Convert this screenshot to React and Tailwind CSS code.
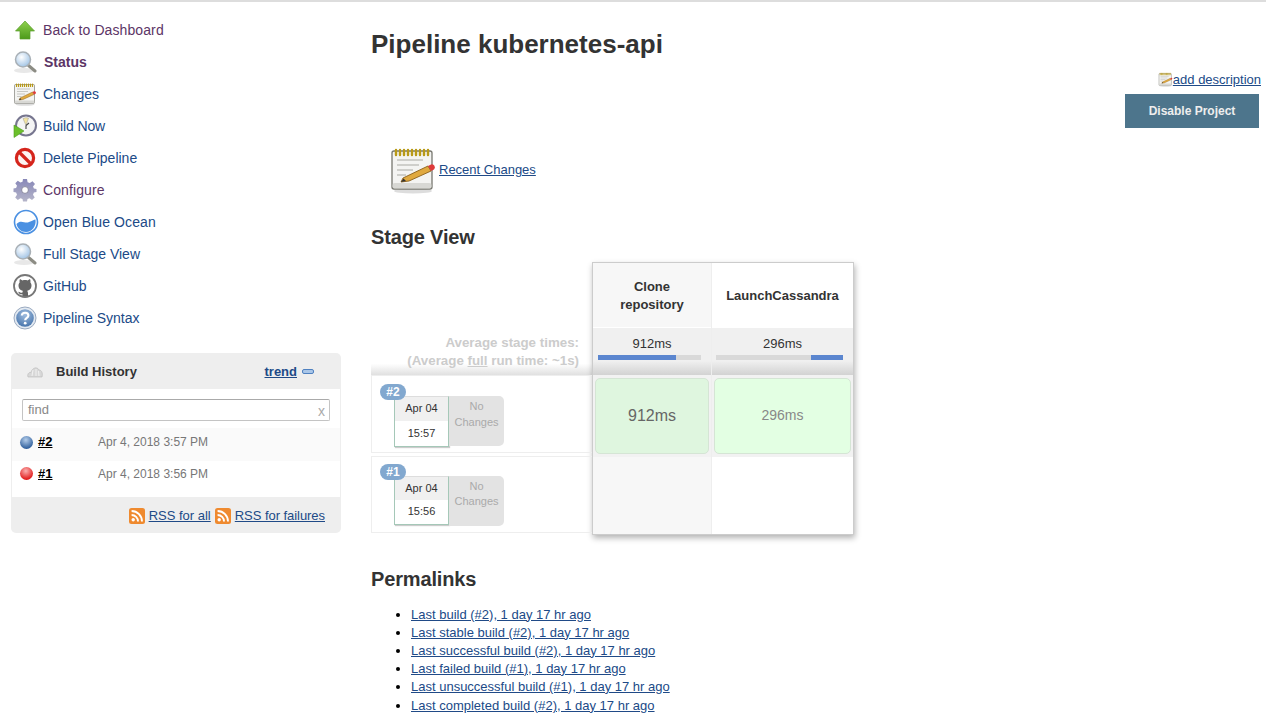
const ArrowIcon = () => (
  <svg width="24" height="24" viewBox="0 0 24 24">
    <defs>
      <linearGradient id="arrowG" x1="0" y1="0" x2="0" y2="1">
        <stop offset="0" stopColor="#8fd14f" />
        <stop offset="1" stopColor="#4c9a1a" />
      </linearGradient>
    </defs>
    <path d="M12 3 L21.5 13 L17 13 L17 21 L7 21 L7 13 L2.5 13 Z" fill="url(#arrowG)" stroke="#5a9e2a" strokeWidth="0.7" />
  </svg>
);

const SearchIcon = () => (
  <svg width="24" height="24" viewBox="0 0 24 24">
    <defs>
      <radialGradient id="lensG" cx="0.4" cy="0.35" r="0.8">
        <stop offset="0" stopColor="#ffffff" />
        <stop offset="1" stopColor="#8fb8e0" />
      </radialGradient>
    </defs>
    <ellipse cx="11" cy="20.5" rx="10" ry="2.5" fill="#e8e8e8" />
    <path d="M15.5 15.5 L22 21" stroke="#8c8c84" strokeWidth="3" strokeLinecap="round" />
    <circle cx="10" cy="9.5" r="7.5" fill="url(#lensG)" stroke="#a9b0b6" strokeWidth="1.5" />
  </svg>
);

const NotepadIcon = ({ size = 24 }) => (
  <svg width={size} height={size} viewBox="0 0 48 48">
    <ellipse cx="24" cy="45" rx="19" ry="2.5" fill="#ddd" />
    <rect x="3" y="5" width="40" height="38" rx="2" fill="#f4f4f2" stroke="#77776f" strokeWidth="1.3" />
    <rect x="3.6" y="37" width="38.8" height="5.4" rx="2" fill="#d8d8d4" />
    <path d="M8 14 H34 M8 19 H30 M8 24 H24 M8 29 H17" stroke="#a9a9a3" strokeWidth="1.2" />
    <path d="M7 4 V9 M11 4 V9 M15 4 V9 M19 4 V9 M23 4 V9 M27 4 V9 M31 4 V9 M35 4 V9 M39 4 V9" stroke="#b99a17" strokeWidth="2.4" strokeLinecap="round" />
    <path d="M14 32 L39 20 L42 25 L20 35 L12 36 Z" fill="#e0a93f" stroke="#8a5f1a" strokeWidth="0.9" />
    <path d="M39 20 L42 18.5 A3 3 0 0 1 45 23.5 L42 25 Z" fill="#de3b3b" />
    <path d="M12 36 L14.5 32.5 L17 35 Z" fill="#333" />
  </svg>
);

const BuildIcon = () => (
  <svg width="24" height="24" viewBox="0 0 24 24">
    <circle cx="13" cy="11.5" r="10" fill="#f4f4f4" stroke="#77768f" strokeWidth="2" />
    <path d="M13 11.5 L10 4.5 A8 8 0 0 1 15.5 4 Z" fill="#f2e3a0" stroke="#999" strokeWidth="0.5" />
    <path d="M13 11.5 L16 9 M13 11.5 L13 15" stroke="#444" strokeWidth="1.1" />
    <path d="M1 11 L11 17 L1 23.5 Z" fill="#6cc02b" stroke="#4e9a1c" strokeWidth="0.6" />
  </svg>
);

const DeleteIcon = () => (
  <svg width="24" height="24" viewBox="0 0 24 24">
    <circle cx="12" cy="12" r="8.6" fill="#fdf4f2" stroke="#d5251c" strokeWidth="3.2" />
    <path d="M6 6 L18 18" stroke="#d5251c" strokeWidth="3.2" />
  </svg>
);

const GearIcon = () => (
  <svg width="24" height="24" viewBox="0 0 24 24">
    <defs>
      <linearGradient id="gearG" x1="0" y1="0" x2="0" y2="1">
        <stop offset="0" stopColor="#8787b8" />
        <stop offset="1" stopColor="#b5b5c9" />
      </linearGradient>
    </defs>
    <path
      d="M10 1 H14 L14.6 4.2 L16.8 5.1 L19.5 3.3 L22 6 L20 8.6 L20.9 10.6 L23.5 11 V14 L20.9 14.6 L20 16.8 L21.7 19.5 L19 22 L16.5 20.3 L14.5 21 L14 23.5 H10 L9.5 21 L7.4 20.2 L4.8 22 L2.2 19.4 L4 16.8 L3.1 14.6 L0.5 14 V10.5 L3.1 10 L4 7.8 L2.3 5.2 L4.8 2.8 L7.4 4.6 L9.5 3.8 Z"
      fill="url(#gearG)"
    />
    <circle cx="12" cy="12" r="3.4" fill="#fff" stroke="#77778f" strokeWidth="0.8" />
  </svg>
);

const OceanIcon = () => (
  <svg width="26" height="26" viewBox="0 0 26 26">
    <circle cx="13" cy="13" r="11.5" fill="#fff" stroke="#4a90e2" strokeWidth="1.6" />
    <path d="M3.5 15 C8 10 12 15 16 13 C19 12 21 10.5 22.5 10.5 C23.5 17 19 23 13 23 C8 23 4.5 19.5 3.5 15 Z" fill="#4a90e2" />
  </svg>
);

const GithubIcon = () => (
  <svg width="24" height="24" viewBox="0 0 24 24">
    <circle cx="12" cy="12" r="11" fill="#fff" stroke="#777" strokeWidth="1.8" />
    <path
      d="M7 5 L9.5 6.4 C11 6 13 6 14.5 6.4 L17 5 C17.6 6.3 17.6 7.5 17.3 8.3 C18 9.2 18.5 10.2 18.5 11.5 C18.5 15 16 16.5 14 16.8 C14.6 17.3 15 18 15 19 V22 H9.5 V20.2 C7.5 20.7 6 20 5.2 17.8 L7 18.3 C7.6 19 8.5 19 9.5 18.6 C9.5 17.8 9.7 17.2 10 16.8 C8 16.5 5.5 15 5.5 11.5 C5.5 10.2 6 9.2 6.7 8.3 C6.4 7.5 6.4 6.3 7 5 Z"
      fill="#666"
    />
  </svg>
);

const HelpIcon = () => (
  <svg width="24" height="24" viewBox="0 0 24 24">
    <defs>
      <radialGradient id="helpG" cx="0.5" cy="0.3" r="0.8">
        <stop offset="0" stopColor="#a3bfe0" />
        <stop offset="1" stopColor="#3b6ba5" />
      </radialGradient>
    </defs>
    <circle cx="12" cy="12" r="11" fill="#e3eaf2" stroke="#9aaac0" strokeWidth="1" />
    <circle cx="12" cy="12" r="8.8" fill="url(#helpG)" />
    <path d="M8.8 9.5 C9 5.8 15.4 5.8 15.4 9.5 C15.4 12 12.2 11.8 12.2 14.2" fill="none" stroke="#fff" strokeWidth="2.2" />
    <circle cx="12.2" cy="17.2" r="1.4" fill="#fff" />
  </svg>
);

const CloudIcon = () => (
  <svg width="16" height="12" viewBox="0 0 16 12">
    <path d="M1 11 C0 8 2 6 4 6.5 C5 2 10 0 12 4 C15 4 16 8 15 11 Z" fill="#d8d8d8" stroke="#bbb" strokeWidth="0.6" />
    <path d="M5 10 L6 4 M9 10 V3 M12 10 L11.5 5" stroke="#f4f4f4" strokeWidth="0.9" />
  </svg>
);

const RssIcon = () => (
  <svg width="16" height="16" viewBox="0 0 16 16" className="shrink-0">
    <rect x="0" y="0" width="16" height="16" rx="2.5" fill="#ef8a2f" />
    <circle cx="4.2" cy="11.8" r="1.7" fill="#fff" />
    <path d="M2.6 7 A6.4 6.4 0 0 1 9 13.5" fill="none" stroke="#fff" strokeWidth="1.9" />
    <path d="M2.6 3 A10.4 10.4 0 0 1 13 13.5" fill="none" stroke="#fff" strokeWidth="1.9" />
  </svg>
);

const tasks = [
  { label: 'Back to Dashboard', icon: <ArrowIcon />, color: 'text-[#5c3566] tracking-[0.1px]' },
  { label: 'Status', icon: <SearchIcon />, color: 'text-[#5c3566] font-bold pl-[1px]' },
  { label: 'Changes', icon: <NotepadIcon />, color: 'text-[#204a87]' },
  { label: 'Build Now', icon: <BuildIcon />, color: 'text-[#204a87] tracking-[-0.1px]' },
  { label: 'Delete Pipeline', icon: <DeleteIcon />, color: 'text-[#204a87]' },
  { label: 'Configure', icon: <GearIcon />, color: 'text-[#5c3566] tracking-[0.1px]' },
  { label: 'Open Blue Ocean', icon: <OceanIcon />, color: 'text-[#204a87] tracking-[0.1px]' },
  { label: 'Full Stage View', icon: <SearchIcon />, color: 'text-[#204a87]' },
  { label: 'GitHub', icon: <GithubIcon />, color: 'text-[#204a87]' },
  { label: 'Pipeline Syntax', icon: <HelpIcon />, color: 'text-[#204a87]' },
];

const builds = [
  { id: '#2', date: 'Apr 4, 2018 3:57 PM', ball: 'bg-[radial-gradient(circle_at_45%_30%,#b4cdea,#2f5f9c_75%)]', row: 'bg-[#fafafa] h-[33px] pb-[5px]' },
  { id: '#1', date: 'Apr 4, 2018 3:56 PM', ball: 'bg-[radial-gradient(circle_at_45%_30%,#fbb0b0,#e01818_75%)]', row: 'bg-white h-[29px] pb-[4px]' },
];

const runs = [
  { id: '#2', time: '15:57', box: 'h-[78px] pt-[20px]', badge: 'top-[8px]', top: 'h-[24px]', bottom: 'h-[25px]', changes: 'pt-[2px] leading-[16px]' },
  { id: '#1', time: '15:56', box: 'mt-[3px] h-[77px] pt-[19px]', badge: 'top-[7px]', top: 'h-[23px]', bottom: 'h-[24px]', changes: 'pt-[3px] leading-[15px]' },
];

const permalinks = [
  'Last build (#2), 1 day 17 hr ago',
  'Last stable build (#2), 1 day 17 hr ago',
  'Last successful build (#2), 1 day 17 hr ago',
  'Last failed build (#1), 1 day 17 hr ago',
  'Last unsuccessful build (#1), 1 day 17 hr ago',
  'Last completed build (#2), 1 day 17 hr ago',
];

function Sidebar() {
  return (
    <aside className="w-[341px] shrink-0 pl-[11px] pt-[12px]">
      <ul>
        {tasks.map((task) => (
          <li key={task.label} className="flex h-8 items-center">
            <span className="flex w-[32px] shrink-0 pl-[2px]">{task.icon}</span>
            <a className={`text-[14px] ${task.color}`}>{task.label}</a>
          </li>
        ))}
      </ul>

      <div className="mt-[19px] overflow-hidden rounded-[5px] bg-[#eeeeee] text-[#333]">
        <div className="flex h-[36px] items-center pl-[16px] pt-[1px]">
          <CloudIcon />
          <b className="ml-[13px] text-[13px] text-[#333]">Build History</b>
          <a className="ml-auto text-[13px] font-bold text-[#204a87] underline">trend</a>
          <span className="ml-[5px] mr-[27px] h-[5px] w-[12px] rounded-[2px] border border-[#4f81c0] bg-[#a9c6e8]"></span>
        </div>
        <div className="mx-[1px] bg-white pt-[10px] pb-[7px]">
          <div className="mx-[10px] flex h-[22px] items-center justify-between rounded-[2px] border border-[#c4c4c4] border-t-[#aaa] pl-[5px] pr-[4px] text-[13px] text-[#888]">
            <span>find</span>
            <span className="pt-[3px] text-[14px] text-[#aaa]">x</span>
          </div>
        </div>
        <div className="mx-[1px] bg-white pb-[7px]">
          {builds.map((b) => (
            <div key={b.id} className={`flex items-center pl-[8px] ${b.row}`}>
              <span className={`h-[13px] w-[13px] rounded-full ${b.ball}`}></span>
              <a className="ml-[5px] w-[60px] text-[13px] font-bold text-black underline">{b.id}</a>
              <span className="text-[12px] text-[#777]">{b.date}</span>
            </div>
          ))}
        </div>
        <div className="flex h-[36px] items-center justify-end gap-[4px] pr-[16px] pt-[1px] text-[13px] text-[#204a87]">
          <RssIcon />
          <a className="underline">RSS for all</a>
          <RssIcon />
          <a className="underline tracking-[-0.05px]">RSS for failures</a>
        </div>
      </div>
    </aside>
  );
}

function RunRow({ run }) {
  return (
    <div className={`relative flex border border-r-0 border-[#eeeeee] pl-[22px] ${run.box}`}>
      <span className={`absolute left-[8px] z-10 flex h-[16px] w-[26px] items-center justify-center rounded-full bg-[#82a8cf] text-[12px] font-bold text-white ${run.badge}`}>
        {run.id}
      </span>
      <div className="w-[55px] self-start border border-[#a5c8b8] border-t-[#dddddd] bg-white text-center text-[11px] text-[#333] shadow-[1px_1px_1px_#ccc]">
        <div className={`flex items-center justify-center bg-[#f0f0f0] ${run.top}`}>Apr 04</div>
        <div className={`flex items-center justify-center ${run.bottom}`}>{run.time}</div>
      </div>
      <div className={`h-[50px] w-[55px] rounded-r-[5px] bg-[#e3e3e3] text-center text-[11px] text-[#aaa] ${run.changes}`}>
        No
        <br />
        Changes
      </div>
    </div>
  );
}

function StageColumn({ name, avg, barPad, barFill, time, timeSize, timeColor, cardBg, width, headBg, bodyBg }) {
  return (
    <div className={`flex flex-col ${width}`}>
      <div className={`flex h-[64px] items-center justify-center pt-[2px] text-center text-[13px] font-bold leading-[18px] text-[#333] ${headBg}`}>
        {name}
      </div>
      <div className="mt-[1px] h-[47px] bg-[linear-gradient(#f0f0f0_70%,#d2d2d2)] pt-[8px] text-center text-[13px] leading-[15px] text-[#333]">
        {avg}
        <div className={`mt-[4px] flex h-[5px] bg-[#d9d9d9] ${barPad}`}>{barFill}</div>
      </div>
      <div className="h-[82px] bg-[#f2f2f2] px-[2px] py-[3px]">
        <div className={`flex h-[76px] items-center justify-center rounded-[5px] border border-[#d5e5d5] ${cardBg} ${timeSize} ${timeColor}`}>
          {time}
        </div>
      </div>
      <div className={`h-[77px] ${bodyBg}`}></div>
    </div>
  );
}

function StageView() {
  return (
    <div className="flex">
      <div className="w-[221px] shrink-0">
        <div className="flex h-[113px] flex-col justify-end bg-[linear-gradient(#ffffff_90%,#e0e0e0)] pb-[5px] pr-[13px] text-right text-[13.33px] font-bold leading-[18px] text-[#cccccc]">
          <div>Average stage times:</div>
          <div>
            (Average <span className="underline">full</span> run time: ~1s)
          </div>
        </div>
        {runs.map((run) => (
          <RunRow key={run.id} run={run} />
        ))}
      </div>
      <div className="flex self-start border border-[#cccccc] shadow-[1px_3px_6px_rgba(0,0,0,0.3)]">
        <StageColumn
          name={<>Clone<br />repository</>}
          avg="912ms"
          barPad="ml-[5px] mr-[10px]"
          barFill={<div className="h-[5px] w-[76%] bg-[#5b86cf]"></div>}
          time="912ms"
          timeSize="text-[16px]"
          timeColor="text-[#666]"
          cardBg="bg-[#dff6df]"
          width="w-[119px] border-r border-[#eeeeee]"
          headBg="bg-[#f7f7f7]"
          bodyBg="bg-[#f7f7f7]"
        />
        <StageColumn
          name="LaunchCassandra"
          avg="296ms"
          barPad="ml-[4px] mr-[10px]"
          barFill={<div className="ml-auto h-[5px] w-[25%] bg-[#5b86cf]"></div>}
          time="296ms"
          timeSize="text-[14px]"
          timeColor="text-[#888]"
          cardBg="bg-[#e3ffe3]"
          width="w-[141px]"
          headBg="bg-white"
          bodyBg="bg-white"
        />
      </div>
    </div>
  );
}

export default function App() {
  return (
    <div className="h-[722px] w-[1266px] overflow-hidden border-t-2 border-[#dddddd] bg-white font-['Liberation_Sans',Arial,sans-serif] text-[#333]">
      <div className="flex">
        <Sidebar />
        <main className="flex-1 pl-[30px] pr-[7px]">
          <h1 className="pt-[27px] text-[26px] font-bold leading-[30px] text-[#333]">Pipeline kubernetes-api</h1>
          <div className="-mr-[2px] mt-[11px] flex items-center justify-end text-[13px] text-[#204a87]">
            <NotepadIcon size={15} />
            <a className="underline">add description</a>
          </div>
          <div className="mt-[4px] flex justify-end">
            <button className="h-[34px] w-[134px] bg-[#4d758c] text-[12px] font-bold text-[#eeeeee]">Disable Project</button>
          </div>
          <div className="mt-[18px] flex items-center pl-[18px]">
            <NotepadIcon size={48} />
            <a className="ml-[2px] text-[13px] text-[#204a87] underline">Recent Changes</a>
          </div>
          <h2 className="mt-[31px] text-[20px] font-bold leading-[24px] tracking-[-0.15px] text-[#333]">Stage View</h2>
          <div className="mt-[13px]">
            <StageView />
          </div>
          <h2 className="mt-[32px] text-[20px] font-bold leading-[24px] tracking-[-0.15px] text-[#333]">Permalinks</h2>
          <ul className="mt-[15px] list-disc pl-[40px] text-[13px] leading-[18px] text-[#204a87]">
            {permalinks.map((link) => (
              <li key={link} className="marker:text-black last:mt-[1px]">
                <a className="underline">{link}</a>
              </li>
            ))}
          </ul>
        </main>
      </div>
    </div>
  );
}
